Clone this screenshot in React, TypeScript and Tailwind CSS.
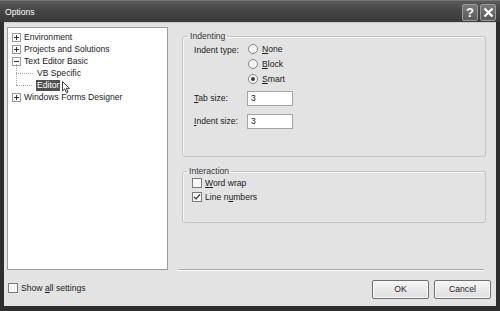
import React from "react";

const font = { fontFamily: '"Liberation Sans", Arial, sans-serif' };

function PlusBox({ minus }: { minus?: boolean }) {
  return (
    <span className="relative w-[9px] h-[9px] border border-[#9a9a9a] bg-white flex items-center justify-center mr-[3px] shrink-0">
      <span className="absolute w-[5px] h-[1px] bg-[#333]" />
      {!minus && <span className="absolute w-[1px] h-[5px] bg-[#333]" />}
    </span>
  );
}

function Radio({ checked }: { checked?: boolean }) {
  return (
    <span className="w-[10px] h-[10px] rounded-full border border-[#858585] bg-[#f6f6f6] flex items-center justify-center mr-[4px] shrink-0">
      {checked && <span className="w-[4px] h-[4px] rounded-full bg-[#3a3a3a]" />}
    </span>
  );
}

function Check({ checked }: { checked?: boolean }) {
  return (
    <span className="w-[10px] h-[10px] border border-[#7a7a7a] bg-[#f8f8f8] flex items-center justify-center mr-[3px] shrink-0">
      {checked && (
        <svg width="8" height="8" viewBox="0 0 8 8">
          <path d="M1 4 L3 6 L7 1.5" stroke="#333" strokeWidth="1.2" fill="none" />
        </svg>
      )}
    </span>
  );
}

export default function App() {
  return (
    <div
      className="w-[500px] h-[311px] bg-[#2e2e2e] flex flex-col text-[8.6px] text-[#1a1a1a] overflow-hidden"
      style={font}
    >
      {/* title bar */}
      <div className="h-[22px] shrink-0 flex items-center pl-[5px] pr-[4px] bg-gradient-to-b from-[#5a5a5a] via-[#444] to-[#3a3a3a] border-t border-[#777]">
        <span className="text-white text-[8.6px] mt-[2px]">Options</span>
        <div className="ml-auto flex gap-[2px] mt-[1px]">
          <div className="w-[16px] h-[17px] rounded-[2px] border border-[#9a9a9a] bg-gradient-to-b from-[#7a7a7a] to-[#5a5a5a] flex items-center justify-center text-white text-[13px] font-bold leading-none">
            ?
          </div>
          <div className="w-[16px] h-[17px] rounded-[2px] border border-[#9a9a9a] bg-gradient-to-b from-[#7a7a7a] to-[#5a5a5a] flex items-center justify-center">
            <svg width="11" height="11" viewBox="0 0 11 11">
              <path d="M1.5 1.5 L9.5 9.5 M9.5 1.5 L1.5 9.5" stroke="white" strokeWidth="2.2" />
            </svg>
          </div>
        </div>
      </div>

      {/* body */}
      <div className="flex-1 mx-[4px] mb-[5px] bg-[#e3e3e3] flex flex-col border-t border-[#cfcfcf]">
        <div className="flex flex-1 pl-[3px] pt-[4px]">
          {/* tree */}
          <div className="relative w-[161px] h-[243px] bg-white border border-[#9c9c9c] pl-[4px] pt-[3px] shrink-0">
            <div className="flex items-center h-[12px]">
              <PlusBox />
              <span>Environment</span>
            </div>
            <div className="flex items-center h-[12px]">
              <PlusBox />
              <span>Projects and Solutions</span>
            </div>
            <div className="flex items-center h-[12px]">
              <PlusBox minus />
              <span>Text Editor Basic</span>
            </div>
            <div className="relative flex items-center h-[12px] pl-[25px]">
              <span className="absolute left-[4px] top-[-3px] h-[9px] border-l border-dotted border-[#aaa]" />
              <span className="absolute left-[4px] top-[6px] w-[17px] border-t border-dotted border-[#aaa]" />
              <span>VB Specific</span>
            </div>
            <div className="relative flex items-center h-[12px] pl-[24px]">
              <span className="absolute left-[4px] top-[-6px] h-[12px] border-l border-dotted border-[#aaa]" />
              <span className="absolute left-[4px] top-[6px] w-[16px] border-t border-dotted border-[#aaa]" />
              <span className="bg-[#4e4e4e] text-white px-[1px] leading-[11px]">Editor</span>
              <svg className="absolute left-[50px] top-[2px]" width="8" height="13" viewBox="0 0 8 13">
                <path d="M0.5 0.5 L0.5 10 L2.8 7.8 L4.5 11.8 L6 11.1 L4.4 7.4 L7.5 7.4 Z" fill="white" stroke="#222" strokeWidth="0.9" />
              </svg>
            </div>
            <div className="flex items-center h-[12px]">
              <PlusBox />
              <span>Windows Forms Designer</span>
            </div>
          </div>

          {/* right pane */}
          <div className="flex flex-col ml-[13px] pt-[3px] w-[307px]">
            <fieldset className="h-[127px] border border-[#c6c6c6] rounded-[3px] px-[11px] shadow-[inset_1px_1px_0_#f5f5f5] ml-[1px] mr-[2px]">
              <legend className="px-[2px] -ml-[6px] text-[#333]">Indenting</legend>
              <div className="flex mt-[1px]">
                <div className="w-[54px]">Indent type:</div>
                <div className="flex flex-col gap-[4px]">
                  <div className="flex items-center h-[11px]">
                    <Radio />
                    <span><u>N</u>one</span>
                  </div>
                  <div className="flex items-center h-[11px]">
                    <Radio />
                    <span><u>B</u>lock</span>
                  </div>
                  <div className="flex items-center h-[11px]">
                    <Radio checked />
                    <span><u>S</u>mart</span>
                  </div>
                </div>
              </div>
              <div className="flex items-center mt-[6px]">
                <div className="w-[53px]"><u>T</u>ab size:</div>
                <div className="w-[46px] h-[15px] bg-white border border-[#a5a5a5] pl-[3px] flex items-center">3</div>
              </div>
              <div className="flex items-center mt-[8px]">
                <div className="w-[53px]"><u>I</u>ndent size:</div>
                <div className="w-[46px] h-[15px] bg-white border border-[#a5a5a5] pl-[3px] flex items-center">3</div>
              </div>
            </fieldset>

            <fieldset className="mt-[8px] h-[58px] border border-[#c6c6c6] rounded-[3px] px-[9px] shadow-[inset_1px_1px_0_#f5f5f5] ml-[1px] mr-[2px]">
              <legend className="px-[2px] -ml-[5px] text-[#333]">Interaction</legend>
              <div className="flex items-center h-[11px] mt-0">
                <Check />
                <span><u>W</u>ord wrap</span>
              </div>
              <div className="flex items-center h-[11px] mt-[3px]">
                <Check checked />
                <span>Line n<u>u</u>mbers</span>
              </div>
            </fieldset>

            <div className="mt-auto mb-[1px] border-t border-[#a9a9a9] border-b-white border-b h-[2px] -ml-[2px] mr-[4px]" />
          </div>
        </div>

        {/* bottom row */}
        <div className="h-[34px] shrink-0 flex items-center pl-[4px] pr-[5px] pb-[2px]">
          <Check />
          <span>Show <u>a</u>ll settings</span>
          <div className="ml-auto flex gap-[5px] mt-[2px]">
            <button className="w-[57px] h-[19px] rounded-[2px] border border-[#6f6f6f] bg-gradient-to-b from-[#f6f6f6] to-[#dedede] shadow-[inset_0_0_0_1px_#fafafa] text-[8.6px]">
              OK
            </button>
            <button className="w-[57px] h-[19px] rounded-[2px] border border-[#6f6f6f] bg-gradient-to-b from-[#f6f6f6] to-[#dedede] shadow-[inset_0_0_0_1px_#fafafa] text-[8.6px]">
              Cancel
            </button>
          </div>
        </div>
      </div>
    </div>
  );
}
